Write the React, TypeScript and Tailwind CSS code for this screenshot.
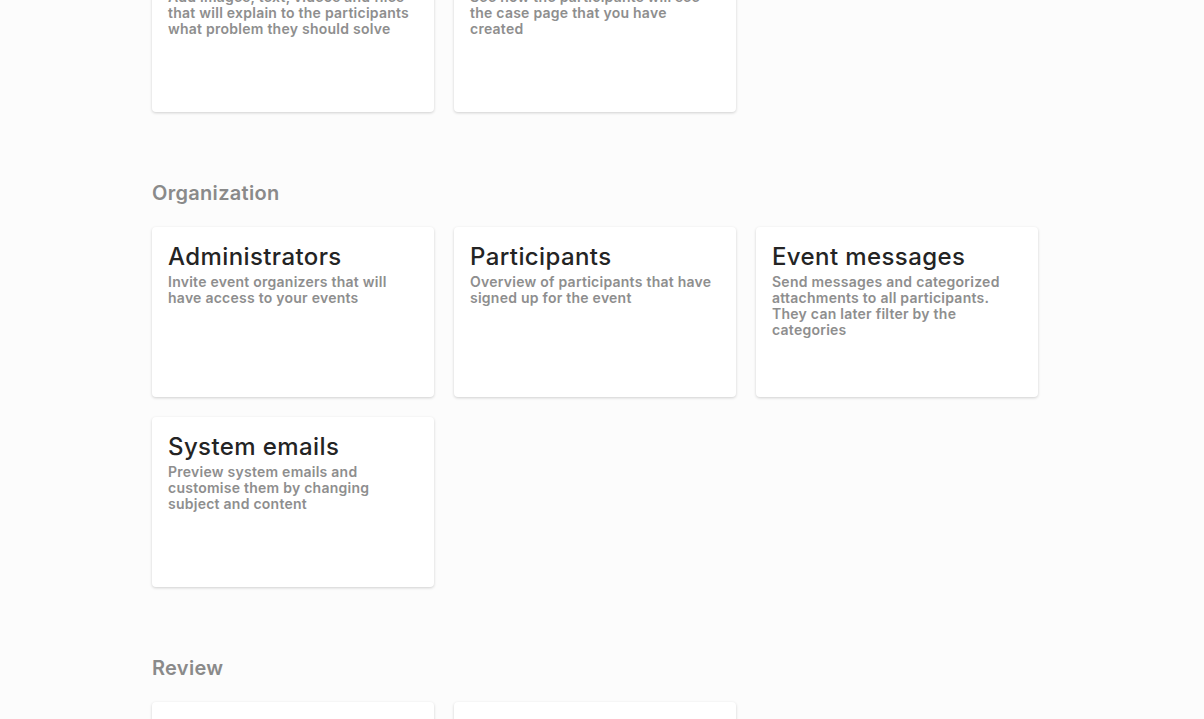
import React from "react";

interface Card {
  title: string;
  text: string;
}

interface Section {
  heading?: string;
  cards: Card[];
}

const sections: Section[] = [
  {
    cards: [
      {
        title: "Case page",
        text: "Add images, text, videos and files that will explain to the participants what problem they should solve",
      },
      {
        title: "Preview case",
        text: "See how the participants will see the case page that you have created",
      },
    ],
  },
  {
    heading: "Organization",
    cards: [
      { title: "Administrators", text: "Invite event organizers that will have access to your events" },
      { title: "Participants", text: "Overview of participants that have signed up for the event" },
      {
        title: "Event messages",
        text: "Send messages and categorized attachments to all participants. They can later filter by the categories",
      },
      {
        title: "System emails",
        text: "Preview system emails and customise them by changing subject and content",
      },
    ],
  },
  {
    heading: "Review",
    cards: [
      { title: "Submissions", text: "" },
      { title: "Judging", text: "" },
    ],
  },
];

function CardItem({ card }: { card: Card }) {
  return (
    <div className="h-[170px] rounded bg-white px-4 pt-[15px] shadow-[0_1px_3px_rgba(0,0,0,0.18)]">
      <h3 className="text-[24px] leading-[30px] font-medium tracking-[0.4px] text-[#242424]">{card.title}</h3>
      <p className="mt-[2px] text-[14px] leading-4 font-semibold tracking-[0.25px] text-[#8e8e8e]">
        {card.text}
      </p>
    </div>
  );
}

export default function App() {
  return (
    <div
      className="h-[719px] overflow-hidden bg-[#fcfcfc]"
      style={{ fontFamily: 'Inter, "Open Sans", sans-serif' }}
    >
      <div className="-mt-[58px] pl-[152px]">
        {sections.map((s, i) => (
          <section key={i} className={i > 0 ? "mt-[67px]" : ""}>
            {s.heading && (
              <h2 className="mb-5 text-xl leading-7 font-semibold tracking-[0.3px] text-[#8a8a8a]">
                {s.heading}
              </h2>
            )}
            <div className="grid grid-cols-[repeat(3,282px)] gap-5">
              {s.cards.map((c) => (
                <CardItem key={c.title} card={c} />
              ))}
            </div>
          </section>
        ))}
      </div>
    </div>
  );
}
